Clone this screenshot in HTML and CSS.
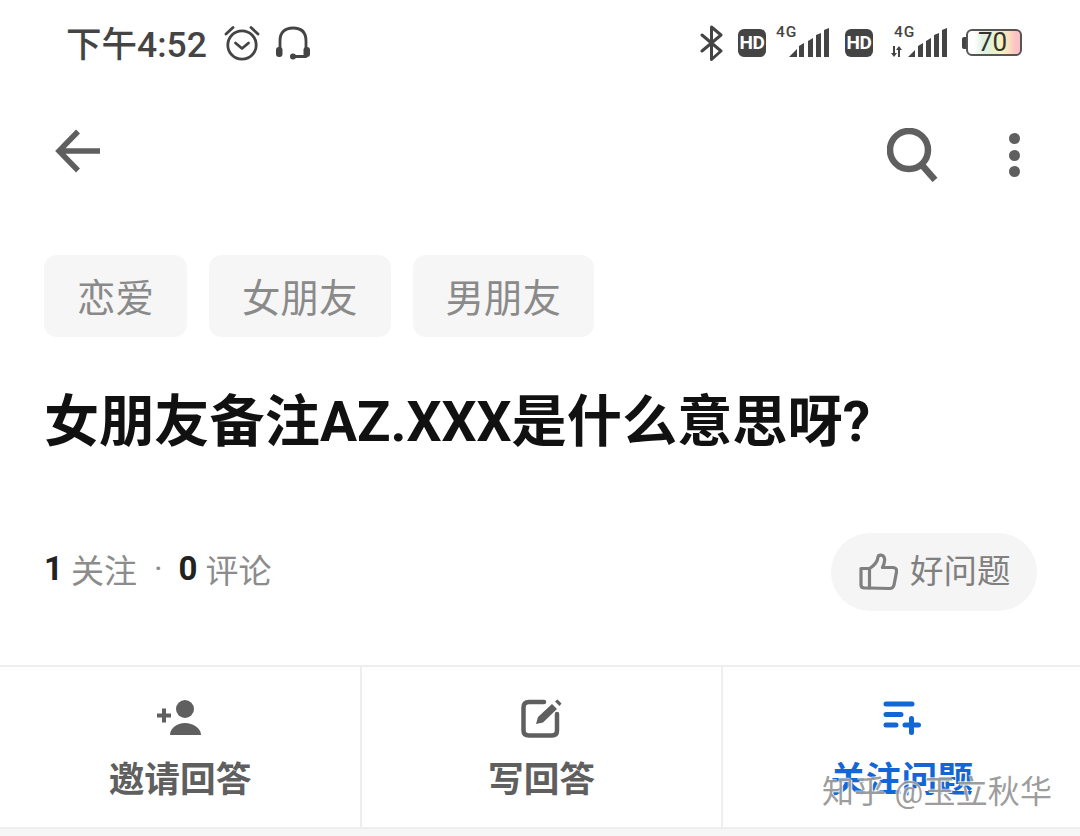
FILE: index.html
```html
<!DOCTYPE html>
<html lang="zh-CN">
<head>
  <meta charset="UTF-8">
  <meta name="viewport" content="width=device-width, initial-scale=1.0">
  <title>女朋友备注AZ.XXX是什么意思呀?</title>
  <link rel="stylesheet" href="styles.css">
</head>
<body>
  <div class="page">
    <!-- status bar -->
    <div class="status-bar">
      <div class="status-left">
        <span class="time">下午4:52</span>
        <svg class="icon-alarm" width="36" height="36" viewBox="0 0 36 36" fill="none" stroke="#444" stroke-width="2.8" stroke-linecap="round" stroke-linejoin="round">
          <circle cx="18" cy="20" r="14.2"/>
          <path d="M11.5 18l6.5 5.5 6.5-5.5"/>
          <path d="M2 9l7-6.5M34 9l-7-6.5"/>
        </svg>
        <svg class="icon-headset" width="38" height="36" viewBox="0 0 38 36" fill="none" stroke="#444" stroke-width="2.8" stroke-linecap="round">
          <path d="M6 26V16C6 7 11 3 19 3s13 4 13 13v10"/>
          <rect x="2" y="22" width="6.500" height="10" rx="3" fill="#444" stroke="none"/>
          <rect x="29.500" y="22" width="6.500" height="10" rx="3" fill="#444" stroke="none"/>
          <path d="M19 31.500h13"/>
          <circle cx="19" cy="31.500" r="3" fill="#444" stroke="none"/>
        </svg>
      </div>
      <div class="status-right">
        <svg class="icon-bt" width="24" height="36" viewBox="0 0 24 36" fill="none" stroke="#444" stroke-width="3" stroke-linejoin="round" stroke-linecap="round">
          <path d="M2 10l19 16-9.500 8.500V2L21 10 2 26"/>
        </svg>
        <span class="hd">HD</span>
        <svg class="icon-signal" width="56" height="34" viewBox="0 0 56 34">
          <text x="0" y="14" class="net-text">4G</text>
          <path d="M13 34l8-8v8zM23 34V23l5-3v14zM32 34V18l5-3v19zM40 34V12l5-2v24zM48 34V7l5-2v29z" fill="#444"/>
        </svg>
        <span class="hd hd-second">HD</span>
        <svg class="icon-signal-two" width="60" height="34" viewBox="0 0 60 34">
          <text x="4" y="14" class="net-text">4G</text>
          <path d="M3 23h2v7h2l-3 4-3-4h2zM10 34H8v-7H6l3-4 3 4h-2z" fill="#444"/>
          <path d="M18 34l7-7v7zM28 34V23l5-3v14zM36 34V18l5-3v19zM44 34V12l5-2v24zM52 34V7l5-2v29z" fill="#444"/>
        </svg>
        <div class="battery">
          <span class="battery-cap"></span>
          <span class="battery-body">70</span>
        </div>
      </div>
    </div>

    <!-- top nav -->
    <div class="nav">
      <svg width="46" height="44" viewBox="0 0 46 44" fill="none" stroke="#5f5f5f" stroke-width="5.500">
        <path d="M23 2.500L4 22l19 19.500M4 22h41"/>
      </svg>
      <div class="nav-right">
        <svg width="52" height="54" viewBox="0 0 52 54" fill="none" stroke="#5f5f5f" stroke-width="6.500">
          <circle cx="22" cy="22" r="19"/>
          <path d="M34 36l14 16"/>
        </svg>
        <div class="dots"><span></span><span></span><span></span></div>
      </div>
    </div>

    <!-- topics -->
    <div class="tags">
      <span class="tag">恋爱</span>
      <span class="tag">女朋友</span>
      <span class="tag">男朋友</span>
    </div>

    <h1 class="title">女朋友备注AZ.XXX是什么意思呀?</h1>

    <div class="stats">
      <div class="counts">
        <b>1</b><span class="label">关注</span><span class="sep">·</span><b>0</b><span class="label">评论</span>
      </div>
      <div class="good-btn">
        <svg width="39" height="38" viewBox="0 0 39 38" fill="none" stroke="#808080" stroke-width="3.200" stroke-linejoin="round" stroke-linecap="round">
          <path d="M2 15.500h8.500V35H5.500Q2 35 2 32z"/>
          <path d="M10.500 15.500c5-3 8-6.500 8.500-11.500 .3-2.500 5.500-3 6.500 1.500.5 3-.5 6-2 9h10.500c2.500 0 4 2 3.500 4.500l-2.500 13c-.5 2.500-2 3.500-4.500 3.500L10.500 35"/>
        </svg>
        <span class="good-text">好问题</span>
      </div>
    </div>

    <!-- bottom actions -->
    <div class="actions">
      <div class="action">
        <svg width="46" height="36" viewBox="0 0 46 36" fill="#5f5f5f">
          <circle cx="28" cy="9" r="9"/>
          <path d="M13 35c0-7 7-12 15-12s16 5 16 12z"/>
          <path d="M0 13.500h5v-5h4v5h5v4H9v5H5v-5H0z"/>
        </svg>
        <span class="action-text">邀请回答</span>
      </div>
      <div class="action">
        <svg width="42" height="40" viewBox="0 0 42 40" fill="none" stroke="#5f5f5f" stroke-width="4.500" stroke-linecap="round">
          <path d="M23 4H8Q2.500 4 2.500 9.500v23Q2.500 37.500 8 37.500h23q5 0 5-5V16"/>
          <path d="M15 26l2-7L31 6l5 5-14 13.500z" fill="#5f5f5f" stroke="none"/>
          <path d="M34 3.500l2.500-2 4 4-2 2.500z" fill="#5f5f5f" stroke="none"/>
        </svg>
        <span class="action-text">写回答</span>
      </div>
      <div class="action action-active">
        <svg width="38" height="34" viewBox="0 0 38 34" fill="none" stroke="#1366d6" stroke-width="5" stroke-linecap="round">
          <path d="M3 3h26M3 13.500h15M3 24h10M22 24h13.500M28.500 17.500v14"/>
        </svg>
        <span class="action-text">关注问题</span>
      </div>
      <span class="watermark">知乎 @玉立秋华</span>
    </div>
    <div class="bottom-strip"></div>
  </div>
</body>
</html>
```

FILE: styles.css
```css
* {
  box-sizing: border-box;
}
body {
  margin: 0;
  background: #fff;
  font-family: Roboto, "Noto Sans CJK SC", sans-serif;
}
.page {
  width: 1080px;
  height: 836px;
  overflow: hidden;
  display: flex;
  flex-direction: column;
}
svg {
  display: block;
  flex: none;
}

/* status bar */
.status-bar {
  height: 88px;
  padding: 0 58px 3px 66px;
  display: flex;
  align-items: center;
  justify-content: space-between;
}
.status-left {
  display: flex;
  align-items: center;
}
.time {
  font-size: 35.500px;
  font-weight: 500;
  color: #444;
  width: 158px;
  padding-bottom: 2px;
  white-space: nowrap;
}
.icon-headset {
  margin-left: 14px;
}
.status-right {
  display: flex;
  align-items: center;
}
.icon-bt {
  margin-right: 14px;
}
.hd {
  width: 28px;
  height: 28px;
  border-radius: 6px;
  background: #444;
  color: #fff;
  font-size: 19px;
  font-weight: 700;
  letter-spacing: -.5px;
  display: flex;
  align-items: center;
  justify-content: center;
  margin-right: 10px;
}
.hd-second {
  margin-left: 13px;
  margin-right: 17px;
}
.net-text {
  font-family: Roboto, sans-serif;
  font-size: 15.500px;
  font-weight: 500;
  letter-spacing: 1px;
  fill: #444;
}
.icon-signal,
.icon-signal-two {
  margin-top: -6px;
  overflow: visible;
}
.icon-signal-two {
  margin-right: 12px;
}
.battery {
  display: flex;
  align-items: center;
}
.battery-cap {
  width: 4px;
  height: 12px;
  background: #444;
  border-radius: 2px 0 0 2px;
}
.battery-body {
  width: 56px;
  height: 27px;
  border: 2px solid #555;
  border-radius: 6px;
  background: linear-gradient(90deg, #fff 0%, #fff 12%, #dff2e4 28%, #e4f3cf 48%, #fbf1bb 66%, #fbdcc0 80%, #fac4c4 90%, #fac0c4 100%);
  color: #333;
  font-size: 26px;
  line-height: 23px;
  padding-left: 10px;
}

/* nav */
.nav {
  height: 125px;
  padding: 41px 60px 0 55px;
  display: flex;
  align-items: flex-start;
  justify-content: space-between;
}
.nav-right {
  display: flex;
  align-items: flex-start;
  gap: 70px;
  margin-top: -1px;
}
.dots {
  display: flex;
  flex-direction: column;
  gap: 5.5px;
  margin-top: 5px;
}
.dots span {
  width: 11px;
  height: 11px;
  border-radius: 50%;
  background: #5f5f5f;
}

/* tags */
.tags {
  margin-top: 42px;
  padding-left: 44px;
  display: flex;
  gap: 22px;
}
.tag {
  height: 82px;
  padding: 3px 33px 0;
  border-radius: 13px;
  background: #f6f6f6;
  color: #8a8a8a;
  font-size: 38.500px;
  line-height: 82px;
}

.title {
  margin: 52px 0 0;
  padding-left: 44px;
  font-size: 55.200px;
  line-height: 66px;
  font-weight: 700;
  color: #111;
  white-space: nowrap;
}

/* stats row */
.stats {
  margin-top: 78px;
  padding: 0 43px 0 44px;
  height: 78px;
  display: flex;
  align-items: center;
  justify-content: space-between;
}
.counts {
  display: flex;
  align-items: center;
  padding-bottom: 7px;
  font-size: 33px;
  color: #8c8c8c;
}
.counts b {
  color: #222;
  font-weight: 700;
}
.label {
  margin-left: 8px;
}
.sep {
  margin: 0 16px 0 17px;
}
.good-btn {
  width: 206px;
  height: 78px;
  border-radius: 39px;
  background: #f5f5f5;
  padding-left: 28px;
  display: flex;
  align-items: center;
  gap: 12px;
  color: #808080;
  font-size: 33.500px;
}
.good-text {
  padding-bottom: 7px;
}

/* bottom actions */
.actions {
  position: relative;
  margin-top: 54px;
  height: 164px;
  border-top: 2px solid #eee;
  border-bottom: 2px solid #eee;
  display: flex;
}
.action {
  width: 362px;
  border-right: 2px solid #eee;
  display: flex;
  flex-direction: column;
  align-items: center;
  padding-top: 31px;
  color: #5f5f5f;
}
.action:nth-child(2) {
  width: 361px;
}
.action:last-of-type {
  width: 357px;
  border-right: none;
}
.action svg {
  height: 40px;
}
.action-text {
  margin-top: 18px;
  font-size: 35.700px;
  line-height: 48px;
  font-weight: 700;
}
.action-active {
  color: #1366d6;
}
.watermark {
  position: absolute;
  left: 822px;
  top: 103px;
  font-size: 32px;
  line-height: 44px;
  letter-spacing: .2px;
  color: rgba(140, 140, 140, .85);
  text-shadow: 1px 1px 0 rgba(255, 255, 255, .9), -1px -1px 0 rgba(255, 255, 255, .6);
  white-space: nowrap;
}
.bottom-strip {
  flex: 1;
  background: #f6f6f6;
}
```
